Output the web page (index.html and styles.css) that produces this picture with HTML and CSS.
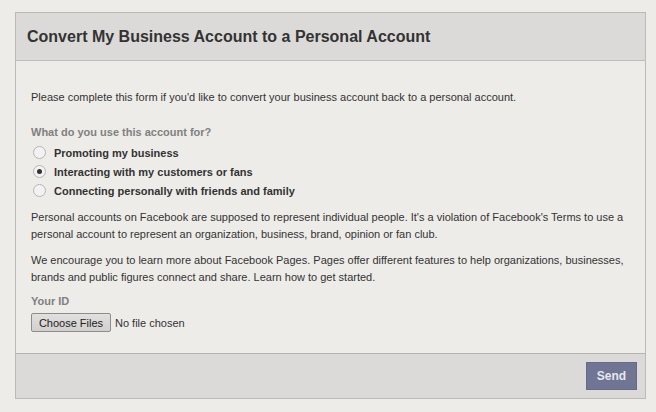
FILE: index.html
```html
<!DOCTYPE html>
<html lang="en">
<head>
    <meta charset="UTF-8">
    <title>Convert My Business Account</title>
    <link rel="stylesheet" href="styles.css">
</head>
<body>
    <div class="panel">
        <div class="panel-head">Convert My Business Account to a Personal Account</div>
        <form class="panel-body" onsubmit="return false">
            <p class="intro">Please complete this form if you'd like to convert your business account back to a personal account.</p>
            <div class="field-label">What do you use this account for?</div>
            <label class="choice"><span class="radio"></span>Promoting my business</label>
            <label class="choice"><span class="radio checked"></span>Interacting with my customers or fans</label>
            <label class="choice"><span class="radio"></span>Connecting personally with friends and family</label>
            <p class="note">Personal accounts on Facebook are supposed to represent individual people. It's a violation of Facebook's Terms to use a personal account to represent an organization, business, brand, opinion or fan club.</p>
            <p class="note">We encourage you to learn more about Facebook Pages. Pages offer different features to help organizations, businesses, brands and public figures connect and share. Learn how to get started.</p>
            <div class="field-label id-label">Your ID</div>
            <div class="file-row">
                <button type="button" class="file-btn">Choose Files</button>
                <span class="file-name">No file chosen</span>
            </div>
        </form>
        <div class="panel-foot">
            <button type="submit" class="send" disabled>Send</button>
        </div>
    </div>
</body>
</html>
```

FILE: styles.css
```css
body{
    margin: 0;
    padding: 12px 11px 14px 15px;
    background-color: #eeece9;
    font-family: "Liberation Sans", Arial, sans-serif;
    color: #333;
}
.panel{
    width: 629px;
    border: 1px solid #bcbab8;
    background-color: #eeece9;
}
.panel-head{
    height: 47px;
    line-height: 47px;
    padding-left: 11px;
    background-color: #dcdad9;
    border-bottom: 1px solid #bfbdbb;
    font-size: 16px;
    font-weight: bold;
    color: #333;
}
.panel-body{
    display: block;
    padding: 29px 15px 21px 15px;
    font-size: 11px;
}
.intro{
    margin: 0 0 20px 0;
    line-height: 15px;
}
.field-label{
    font-weight: bold;
    color: #808080;
    line-height: 15px;
    margin-bottom: 3px;
}
.choice{
    display: flex;
    align-items: center;
    height: 19px;
    font-weight: bold;
    color: #333;
}
.radio{
    width: 11px;
    height: 11px;
    border: 1px solid #b5b5b5;
    border-radius: 50%;
    background-color: #f2f2f2;
    margin: 0 8px 0 2px;
    position: relative;
}
.radio.checked::after{
    content: "";
    position: absolute;
    left: 3px;
    top: 3px;
    width: 5px;
    height: 5px;
    border-radius: 50%;
    background-color: #333;
}
.note{
    margin: 9px 0 8px 0;
    line-height: 17px;
}
.id-label{
    margin-top: 8px;
}
.file-row{
    display: flex;
    align-items: center;
    margin-top: 4px;
}
.file-btn{
    height: 19px;
    width: 80px;
    padding: 0;
    font-family: "Liberation Sans", Arial, sans-serif;
    font-size: 11px;
    color: #222;
    background: linear-gradient(#e2e0de, #d2d0ce);
    border: 1px solid #8f8d8b;
    border-radius: 2px;
}
.file-name{
    margin-left: 4px;
    font-size: 11px;
}
.panel-foot{
    height: 44px;
    border-top: 1px solid #b5b3b1;
    background-color: #dcdad9;
    display: flex;
    justify-content: flex-end;
    align-items: center;
}
.send{
    width: 51px;
    height: 28px;
    margin-right: 8px;
    background-color: #6f7592;
    border: 1px solid #666c88;
    color: #e6e7ee;
    font-family: "Liberation Sans", Arial, sans-serif;
    font-size: 12px;
    font-weight: bold;
}
```
